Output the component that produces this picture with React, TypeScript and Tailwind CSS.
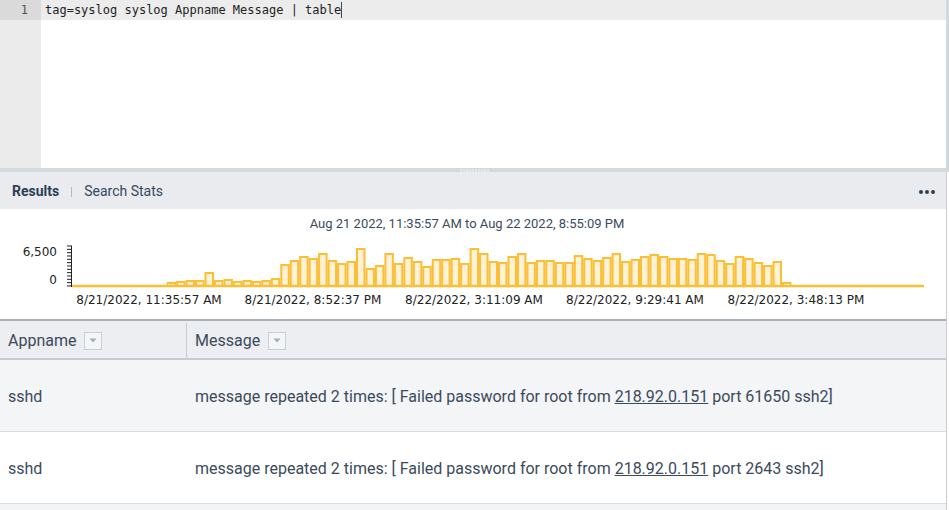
import { Fragment } from 'react';

// bucket heights in px, read off the histogram
const bars = [
  0, 0, 0, 0, 0, 0, 0, 0, 0, 0,
  3, 4, 5, 5, 13, 5, 6, 4, 5, 4,
  5, 7, 21, 25, 29, 27, 32, 25, 22, 24,
  37, 17, 20, 32, 22, 28, 24, 19, 26, 26,
  27, 22, 37, 32, 24, 23, 29, 32, 23, 25,
  25, 23, 23, 30, 27, 25, 28, 32, 24, 26,
  29, 31, 29, 27, 27, 26, 32, 31, 25, 22,
  29, 27, 23, 20, 24, 3, 0, 0, 0, 0,
  0, 0, 0, 0, 0, 0, 0, 0, 0, 0,
];

const xLabels = [
  { x: 149, text: '8/21/2022, 11:35:57 AM' },
  { x: 313, text: '8/21/2022, 8:52:37 PM' },
  { x: 474, text: '8/22/2022, 3:11:09 AM' },
  { x: 635, text: '8/22/2022, 9:29:41 AM' },
  { x: 796, text: '8/22/2022, 3:48:13 PM' },
];

const rows = [
  { app: 'sshd', port: '61650' },
  { app: 'sshd', port: '2643' },
];

function Histogram() {
  const left = 72;
  const right = 924;
  const base = 50;
  const w = (right - left) / bars.length;
  const ticks = Array.from({ length: 13 }, (_, i) => 10 + i * 3.33);

  return (
    <svg width={949} height={82} viewBox="0 0 949 82" className="block">
      {bars.map((h, i) =>
        h > 0 ? (
          <rect
            key={i}
            x={left + i * w + 1}
            y={base - h}
            width={w - 2}
            height={h}
            fill="#fff2d6"
            stroke="#fbbe35"
            strokeWidth={2}
          />
        ) : null
      )}
      <line x1={left} x2={right} y1={base} y2={base} stroke="#fbbe35" strokeWidth={2.5} />
      <line x1={left - 0.5} x2={left - 0.5} y1={10} y2={base + 1} stroke="#222" strokeWidth={1} />
      {ticks.map((y, i) => (
        <line key={i} x1={left - 5} x2={left} y1={y} y2={y} stroke="#222" strokeWidth={1} />
      ))}
      <g fontFamily="'DejaVu Sans', sans-serif" fontSize={12} fill="#222">
        <text x={57} y={20} textAnchor="end">6,500</text>
        <text x={57} y={48} textAnchor="end">0</text>
        {xLabels.map((l) => (
          <text key={l.text} x={l.x} y={68} textAnchor="middle">{l.text}</text>
        ))}
      </g>
    </svg>
  );
}

function SortButton() {
  return (
    <span className="inline-flex items-center justify-center w-[18px] h-[18px] border border-[#c9cfd6] bg-[#f4f5f7] ml-2">
      <svg width="8" height="5" viewBox="0 0 8 5">
        <path d="M0.5 0.5 L7.5 0.5 L4 4.5 Z" fill="#a3abb4" />
      </svg>
    </span>
  );
}

export default function App() {
  return (
    <div className="w-[949px] h-[510px] overflow-hidden bg-white flex flex-col font-['Roboto',sans-serif]">
      {/* query editor */}
      <div className="h-[168px] flex border-r-[3px] border-[#d3d8dd]">
        <div className="w-[41px] bg-[#ebebeb] flex flex-col">
          <div className="h-[20px] bg-[#dadada] text-right pr-[13px] text-[12px] leading-[20px] text-[#555] font-['DejaVu_Sans_Mono',monospace]">
            1
          </div>
        </div>
        <div className="flex-1">
          <div className="h-[20px] bg-[#ececec] pl-[4px] text-[12px] leading-[20px] text-[#222] font-['DejaVu_Sans_Mono',monospace] flex items-center">
            <span>tag=syslog syslog Appname Message | table</span>
            <span className="w-px h-[16px] bg-[#444]" />
          </div>
        </div>
      </div>

      {/* splitter */}
      <div className="h-[4px] bg-[#d4d9de] flex justify-center items-center">
        <div className="flex gap-[1px] ml-[-1px]">
          {Array.from({ length: 10 }).map((_, i) => (
            <span key={i} className="w-[2px] h-[3px] bg-[#e4e7ea]" />
          ))}
        </div>
      </div>

      <div className="flex-1 flex flex-col border-r border-[#c8ced4] mr-[2px]">
        {/* tabs */}
        <div className="h-[37px] bg-[#e9ebee] flex items-center pt-[2px] pl-[12px] pr-[11px] text-[14px] text-[#34495e]">
          <span className="font-bold text-[#2c3e55]">Results</span>
          <span className="w-px h-[10px] bg-[#b3bac2] mx-[12px]" />
          <span>Search Stats</span>
          <div className="ml-auto flex gap-[2px]">
            {[0, 1, 2].map((i) => (
              <span key={i} className="w-[4px] h-[4px] rounded-full bg-[#2c3e55]" />
            ))}
          </div>
        </div>

        {/* chart */}
        <div className="h-[110px] flex flex-col">
          <div className="text-center text-[13px] leading-[16px] text-[#3b4b5d] pt-[7px] pb-[4px]">
            <span className="relative left-[-6px]">Aug 21 2022, 11:35:57 AM to Aug 22 2022, 8:55:09 PM</span>
          </div>
          <Histogram />
        </div>

        {/* table */}
        <div className="flex-1 bg-[#f3f4f6] border-t-2 border-[#a9b2bb] text-[16px] text-[#3b4a5b]">
          <div className="grid grid-cols-[187px_1fr] h-[39px] pt-[2px] bg-[#eceef1] border-b-2 border-[#c4cbd2]">
            <div className="flex items-center pl-[8px] border-r border-[#c4cbd2]">
              Appname
              <SortButton />
            </div>
            <div className="flex items-center pl-[8px]">
              Message
              <SortButton />
            </div>
          </div>
          {rows.map((r, i) => (
            <div
              key={i}
              className={`grid grid-cols-[187px_1fr] h-[72px] pt-[2px] items-center border-b border-[#d9dde2] ${i === 0 ? 'bg-[#f4f5f7]' : 'bg-white'}`}
            >
              <div className="pl-[8px]">{r.app}</div>
              <div className="pl-[8px]">
                <Fragment>
                  message repeated 2 times: [ Failed password for root from{' '}
                  <span className="underline">218.92.0.151</span> port {r.port} ssh2]
                </Fragment>
              </div>
            </div>
          ))}
        </div>
      </div>
    </div>
  );
}
